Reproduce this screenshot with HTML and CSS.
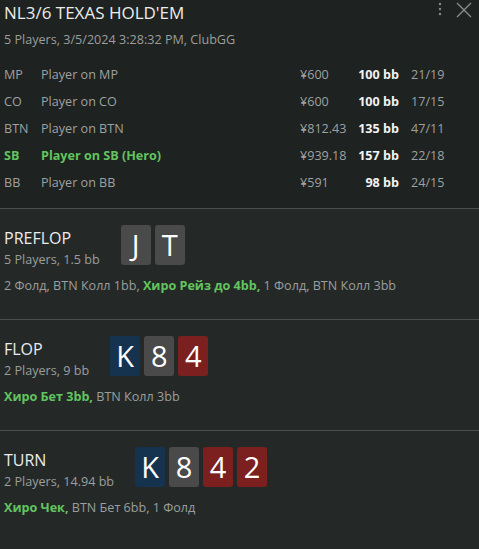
FILE: index.html
```html
<!DOCTYPE html>
<html lang="en">
<head>
    <meta charset="UTF-8">
    <meta name="viewport" content="width=device-width, initial-scale=1.0">
    <title>Hand NL3/6</title>
    <link rel="stylesheet" href="styles.css">
</head>
<body>
    <div class="hand-header">
        <div class="title-row">
            <h1 class="title">NL3/6 TEXAS HOLD'EM</h1>
            <div class="window-buttons">
                <svg class="icon-more" width="6" height="14" viewBox="0 0 6 14">
                    <circle cx="3" cy="2" r="1.2"/>
                    <circle cx="3" cy="7" r="1.2"/>
                    <circle cx="3" cy="12" r="1.2"/>
                </svg>
                <svg class="icon-close" width="16" height="16" viewBox="0 0 16 16">
                    <path d="M1 1 L15 15 M15 1 L1 15"/>
                </svg>
            </div>
        </div>
        <div class="subtitle">5 Players, 3/5/2024 3:28:32 PM, ClubGG</div>

        <div class="players">
            <div class="player">
                <span class="pos">MP</span>
                <span class="name">Player on MP</span>
                <span class="stack">¥600</span>
                <span class="bb">100 bb</span>
                <span class="stats">21/19</span>
            </div>
            <div class="player">
                <span class="pos">CO</span>
                <span class="name">Player on CO</span>
                <span class="stack">¥600</span>
                <span class="bb">100 bb</span>
                <span class="stats">17/15</span>
            </div>
            <div class="player">
                <span class="pos">BTN</span>
                <span class="name">Player on BTN</span>
                <span class="stack">¥812.43</span>
                <span class="bb">135 bb</span>
                <span class="stats">47/11</span>
            </div>
            <div class="player hero">
                <span class="pos">SB</span>
                <span class="name">Player on SB (Hero)</span>
                <span class="stack">¥939.18</span>
                <span class="bb">157 bb</span>
                <span class="stats">22/18</span>
            </div>
            <div class="player">
                <span class="pos">BB</span>
                <span class="name">Player on BB</span>
                <span class="stack">¥591</span>
                <span class="bb">98 bb</span>
                <span class="stats">24/15</span>
            </div>
        </div>
    </div>

    <div class="street">
        <div class="street-top">
            <div class="street-info">
                <div class="street-name">PREFLOP</div>
                <div class="street-pot">5 Players, 1.5 bb</div>
            </div>
            <div class="cards">
                <div class="card grey">J</div>
                <div class="card grey">T</div>
            </div>
        </div>
        <div class="actions">2 Фолд, BTN Колл 1bb, <b class="hero-act">Хиро Рейз до 4bb,</b> 1 Фолд, BTN Колл 3bb</div>
    </div>

    <div class="street">
        <div class="street-top">
            <div class="street-info">
                <div class="street-name">FLOP</div>
                <div class="street-pot">2 Players, 9 bb</div>
            </div>
            <div class="cards">
                <div class="card blue">K</div>
                <div class="card grey">8</div>
                <div class="card red">4</div>
            </div>
        </div>
        <div class="actions"><b class="hero-act">Хиро Бет 3bb,</b> BTN Колл 3bb</div>
    </div>

    <div class="street">
        <div class="street-top">
            <div class="street-info">
                <div class="street-name">TURN</div>
                <div class="street-pot">2 Players, 14.94 bb</div>
            </div>
            <div class="cards">
                <div class="card blue">K</div>
                <div class="card grey">8</div>
                <div class="card red">4</div>
                <div class="card red">2</div>
            </div>
        </div>
        <div class="actions"><b class="hero-act">Хиро Чек,</b> BTN Бет 6bb, 1 Фолд</div>
    </div>
</body>
</html>
```
FILE: styles.css
```css
html, body {
    margin: 0;
    height: 100%;
}
body {
    background: #242928;
    color: #e8e8e8;
    font-family: "Open Sans", "Noto Sans", sans-serif;
    font-size: 12.6px;
}
.hand-header {
    background: #1e2220;
    padding: 0 4px 12px 4px;
    border-bottom: 1px solid #4a4e4c;
}
.title-row {
    display: flex;
    justify-content: space-between;
    align-items: flex-start;
}
.title {
    margin: 0;
    font-size: 17px;
    font-weight: normal;
    line-height: 25px;
    color: #ececec;
}
.window-buttons {
    display: flex;
    gap: 13px;
    padding: 2px 3px 0 0;
}
.icon-more circle {
    fill: #8a8d8c;
}
.icon-close path {
    stroke: #8a8d8c;
    stroke-width: 1.4;
}
.subtitle {
    color: #9b9e9d;
    line-height: 20px;
    margin-top: 5px;
    margin-bottom: 11px;
}
.player {
    display: grid;
    grid-template-columns: 37px 259px 56px 45px 60px;
    height: 27px;
    align-items: center;
    color: #9ea1a0;
}
.player .bb {
    color: #f2f2f2;
    font-weight: bold;
    text-align: right;
    padding-right: 2px;
}
.player .stats {
    padding-left: 10px;
}
.player.hero .pos,
.player.hero .name {
    color: #62c45e;
    font-weight: bold;
}
.street {
    padding: 16px 4px 0 4px;
    height: 94px;
    border-bottom: 1px solid #4a4e4c;
}
.street:last-child {
    border-bottom: none;
}
.street-top {
    display: flex;
    gap: 21px;
    height: 40px;
}
.street-info {
    padding-top: 2px;
}
.street-name {
    font-size: 16px;
    line-height: 22px;
    color: #ececec;
}
.street-pot {
    color: #9b9e9d;
    line-height: 21px;
}
.cards {
    display: flex;
    gap: 4px;
}
.card {
    width: 30px;
    height: 40px;
    border-radius: 3px;
    color: #ffffff;
    font-size: 29px;
    line-height: 40px;
    text-align: center;
}
.card.grey {
    background: #4a4a4a;
}
.card.blue {
    background: #15334f;
}
.card.red {
    background: #7b1f1f;
}
.actions {
    margin-top: 12px;
    color: #9b9e9d;
    line-height: 18px;
}
.hero-act {
    color: #62c45e;
}
```
